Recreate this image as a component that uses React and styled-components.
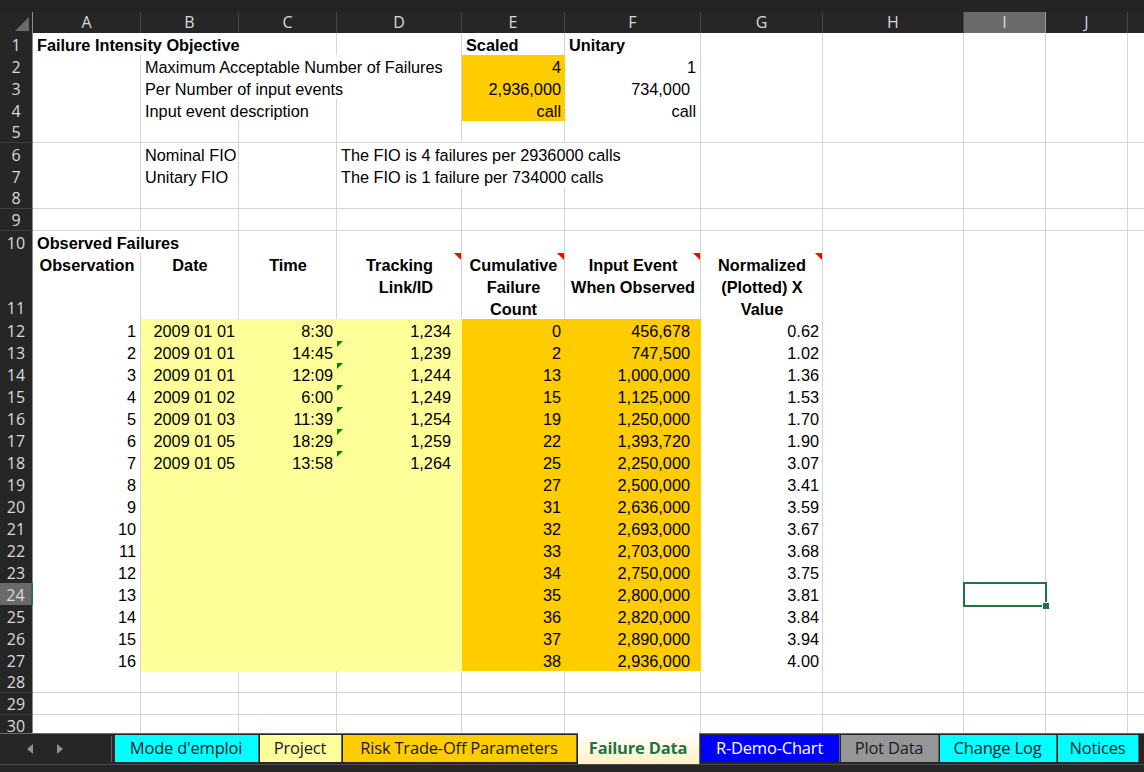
import React from "react";
import styled, { createGlobalStyle } from "styled-components";

const GRID = "#d4d4d4";
const YELLOW = "#ffff99";
const ORANGE = "#ffcc00";
const GREEN = "#217346";
const DARK = "#262626";

const COLS = [108, 98, 98, 125, 103, 136, 122, 141, 82, 82, 82];
const LETTERS = ["A", "B", "C", "D", "E", "F", "G", "H", "I", "J", "K"];
const TEMPLATE = `33px ${COLS.map((w) => w + "px").join(" ")}`;
const SEL_COL = 8;
const SEL_ROW = 24;

const Global = createGlobalStyle`
  html, body {
    margin: 0;
    padding: 0;
    width: 1144px;
    height: 772px;
    overflow: hidden;
    background: ${DARK};
  }
`;

const Window = styled.div`
  width: 1144px;
  height: 772px;
  display: flex;
  flex-direction: column;
  overflow: hidden;
  background: ${DARK};
`;

const TopStrip = styled.div`
  height: 12px;
  background: #242424;
`;

const HeaderRow = styled.div`
  display: grid;
  grid-template-columns: ${TEMPLATE};
  height: 21px;
  background: ${DARK};
`;

const Corner = styled.div`
  border-right: 1px solid #8c8c8c;
  border-bottom: 1px solid #8c8c8c;
  display: flex;
  align-items: flex-end;
  justify-content: flex-end;
  svg {
    display: block;
    margin: 0 3px 3px 0;
  }
`;

const ColHead = styled.div`
  background: ${(p) => (p.$sel ? "#6a6a6a" : DARK)};
  color: #dadada;
  border-right: 1px solid ${(p) => (p.$sel ? "#9a9a9a" : "#474747")};
  border-bottom: ${(p) => (p.$sel ? `2px solid ${GREEN}` : "1px solid #8c8c8c")};
  font: 400 16px/21px "Open Sans", "Liberation Sans", sans-serif;
  text-align: center;
`;

const Body = styled.div`
  height: 700px;
  overflow: hidden;
  background: #fff;
`;

const Row = styled.div`
  display: grid;
  grid-template-columns: ${TEMPLATE};
  height: ${(p) => p.$h}px;
`;

const RowNum = styled.div`
  background: ${(p) => (p.$sel ? "#6a6a6a" : DARK)};
  color: #dadada;
  border-right: ${(p) => (p.$sel ? `2px solid ${GREEN}` : "1px solid #8c8c8c")};
  border-bottom: 1px solid #3e3e3e;
  font: 400 16px/20px "Open Sans", "Liberation Sans", sans-serif;
  display: flex;
  justify-content: center;
  align-items: ${(p) => (p.$tall ? "flex-end" : "center")};
  padding-bottom: ${(p) => (p.$tall ? 2 : 0)}px;
`;

const Cell = styled.div`
  grid-column: span ${(p) => p.$span};
  position: relative;
  background: ${(p) => p.$fill || "#fff"};
  border-right: 1px solid ${(p) => p.$fill || GRID};
  border-bottom: 1px solid ${(p) => p.$fill || GRID};
  padding: 1px ${(p) => p.$pr}px 0 4px;
  font: ${(p) => (p.$bold ? 700 : 400)} 16.3px/22px "Liberation Sans", Arial, sans-serif;
  color: #000;
  text-align: ${(p) => p.$align};
  white-space: ${(p) => (p.$head ? "pre-line" : "pre")};

  &::before {
    content: "";
    display: ${(p) => (p.$warn ? "block" : "none")};
    position: absolute;
    top: 0;
    left: 0;
    border-style: solid;
    border-width: 6px 6px 0 0;
    border-color: #008000 transparent transparent transparent;
  }

  &::after {
    content: "";
    display: ${(p) => (p.$note ? "block" : "none")};
    position: absolute;
    top: 0;
    right: 0;
    border-style: solid;
    border-width: 0 7px 7px 0;
    border-color: transparent #ff0000 transparent transparent;
  }
`;

const Selection = styled.div`
  position: absolute;
  z-index: 3;
  top: -1px;
  left: -1px;
  right: -2px;
  bottom: -1px;
  border: 2px solid ${GREEN};
  pointer-events: none;
`;

const FillHandle = styled.div`
  position: absolute;
  right: -5px;
  bottom: -5px;
  width: 6px;
  height: 6px;
  background: ${GREEN};
  border: 1px solid #fff;
`;

const TabBar = styled.div`
  height: 30px;
  display: flex;
  align-items: stretch;
  background: ${DARK};
  border-top: 1px solid #6b6b6b;
  border-bottom: 1px solid #4a4a4a;
`;

const Nav = styled.div`
  flex: 0 0 112px;
  display: flex;
  align-items: center;
  gap: 24px;
  padding-left: 27px;
  box-sizing: border-box;
  border-right: 1px solid #5e5e5e;
  margin: 2px 3px 2px 0;
`;

const Tabs = styled.div`
  flex: 0 0 auto;
  display: flex;
  align-items: stretch;
`;

const Tab = styled.div`
  width: ${(p) => p.$w}px;
  margin: ${(p) => (p.$active ? "-1px 1px 0 0" : "1px 1px 2px 0")};
  padding: 0 1px 2px 0;
  border-right: 1px solid #5e5e5e;
  background: ${(p) =>
    p.$active ? "linear-gradient(#ffffff, #fdf1c4)" : p.$bg};
  background-clip: border-box;
  color: ${(p) => (p.$active ? GREEN : p.$color || "#1a1a2a")};
  font: ${(p) => (p.$active ? 700 : 400)} 16.5px/24px "Open Sans", "Liberation Sans", sans-serif;
  letter-spacing: -0.2px;
  text-align: center;
  white-space: nowrap;
  display: flex;
  align-items: center;
  justify-content: center;
`;

const StatusBar = styled.div`
  flex: 1;
  background: ${DARK};
`;

const Arrow = ({ dir }) => (
  <svg width="6" height="10" viewBox="0 0 6 10">
    <polygon
      points={dir === "left" ? "6,0 6,10 0,5" : "0,0 0,10 6,5"}
      fill="#8f8f8f"
    />
  </svg>
);

const TABS = [
  { label: "Mode d'emploi", w: 142, bg: "#00ffff" },
  { label: "Project", w: 80, bg: YELLOW },
  { label: "Risk Trade-Off Parameters", w: 232, bg: ORANGE },
  { label: "Failure Data", w: 120, active: true },
  { label: "R-Demo-Chart", w: 137, bg: "#0000ff", color: "#fff" },
  { label: "Plot Data", w: 96, bg: "#969696" },
  { label: "Change Log", w: 115, bg: "#00ffff" },
  { label: "Notices", w: 79, bg: "#00ffff" },
];

const R = { align: "right" };
const B = { bold: true };

const DATES = ["2009 01 01", "2009 01 01", "2009 01 01", "2009 01 02", "2009 01 03", "2009 01 05", "2009 01 05"];
const TIMES = ["8:30", "14:45", "12:09", "6:00", "11:39", "18:29", "13:58"];
const TRACK = ["1,234", "1,239", "1,244", "1,249", "1,254", "1,259", "1,264"];
const COUNTS = [0, 2, 13, 15, 19, 22, 25, 27, 31, 32, 33, 34, 35, 36, 37, 38];
const EVENTS = [
  "456,678", "747,500", "1,000,000", "1,125,000", "1,250,000", "1,393,720",
  "2,250,000", "2,500,000", "2,636,000", "2,693,000", "2,703,000", "2,750,000",
  "2,800,000", "2,820,000", "2,890,000", "2,936,000",
];
const XVALS = ["0.62", "1.02", "1.36", "1.53", "1.70", "1.90", "3.07", "3.41", "3.59", "3.67", "3.68", "3.75", "3.81", "3.84", "3.94", "4.00"];

const HEAD = { bold: true, head: true, align: "center" };

const ROWS = [
  { n: 1, cells: { 0: { t: "Failure Intensity Objective", span: 3, ...B }, 4: { t: "Scaled", ...B }, 5: { t: "Unitary", ...B } } },
  { n: 2, cells: { 1: { t: "Maximum Acceptable Number of Failures", span: 3 }, 4: { t: "4", ...R, fill: ORANGE }, 5: { t: "1", ...R, pr: 4 } } },
  { n: 3, cells: { 1: { t: "Per Number of input events", span: 3 }, 4: { t: "2,936,000", ...R, fill: ORANGE }, 5: { t: "734,000", ...R, pr: 10 } } },
  { n: 4, cells: { 1: { t: "Input event description", span: 2 }, 4: { t: "call", ...R, fill: ORANGE }, 5: { t: "call", ...R, pr: 4 } } },
  { n: 5 },
  { n: 6, cells: { 1: { t: "Nominal FIO" }, 3: { t: "The FIO is 4 failures per 2936000 calls", span: 3 } } },
  { n: 7, cells: { 1: { t: "Unitary FIO" }, 3: { t: "The FIO is 1 failure per 734000 calls", span: 3 } } },
  { n: 8 },
  { n: 9 },
  { n: 10, cells: { 0: { t: "Observed Failures", span: 2, ...B } } },
  {
    n: 11,
    h: 66,
    cells: {
      0: { t: "Observation", ...HEAD },
      1: { t: "Date", ...HEAD },
      2: { t: "Time", ...HEAD },
      3: { t: "Tracking\nLink/ID", ...HEAD, align: "right", pr: 28, note: true },
      4: { t: "Cumulative\nFailure\nCount", ...HEAD, note: true },
      5: { t: "Input Event\nWhen Observed", ...HEAD, note: true },
      6: { t: "Normalized\n(Plotted) X\nValue", ...HEAD, note: true },
    },
  },
  ...COUNTS.map((c, i) => ({
    n: 12 + i,
    cells: {
      0: { t: String(i + 1), ...R, pr: 4 },
      1: { t: DATES[i] || "", ...R, fill: YELLOW },
      2: { t: TIMES[i] || "", ...R, fill: YELLOW },
      3: { t: TRACK[i] || "", ...R, pr: 10, fill: YELLOW, warn: i > 0 && i < 7 },
      4: { t: String(c), ...R, fill: ORANGE },
      5: { t: EVENTS[i], ...R, pr: 10, fill: ORANGE },
      6: { t: XVALS[i], ...R },
    },
  })),
  { n: 28 },
  { n: 29 },
  { n: 30 },
];

const SheetRow = ({ row }) => {
  const cells = [];
  const specs = row.cells || {};
  let col = 0;
  while (col < COLS.length) {
    const s = specs[col] || {};
    const span = s.span || 1;
    const selected = row.n === SEL_ROW && col === SEL_COL;
    cells.push(
      <Cell
        key={col}
        $span={span}
        $fill={s.fill}
        $bold={s.bold}
        $head={s.head}
        $align={s.align || "left"}
        $pr={s.pr ?? 3}
        $note={s.note}
        $warn={s.warn}
      >
        {s.t}
        {selected && (
          <Selection>
            <FillHandle />
          </Selection>
        )}
      </Cell>
    );
    col += span;
  }
  return (
    <Row $h={row.h || 22}>
      <RowNum $sel={row.n === SEL_ROW} $tall={!!row.h}>
        {row.n}
      </RowNum>
      {cells}
    </Row>
  );
};

export default function App() {
  return (
    <Window>
      <Global />
      <TopStrip />
      <HeaderRow>
        <Corner>
          <svg width="14" height="14" viewBox="0 0 14 14">
            <polygon points="14,0 14,14 0,14" fill="#6b6b6b" />
          </svg>
        </Corner>
        {LETTERS.map((l, i) => (
          <ColHead key={l} $sel={i === SEL_COL}>
            {l}
          </ColHead>
        ))}
      </HeaderRow>
      <Body>
        {ROWS.map((r) => (
          <SheetRow key={r.n} row={r} />
        ))}
      </Body>
      <TabBar>
        <Nav>
          <Arrow dir="left" />
          <Arrow dir="right" />
        </Nav>
        <Tabs>
          {TABS.map((t) => (
            <Tab key={t.label} $w={t.w} $bg={t.bg} $color={t.color} $active={t.active}>
              {t.label}
            </Tab>
          ))}
        </Tabs>
      </TabBar>
      <StatusBar />
    </Window>
  );
}
